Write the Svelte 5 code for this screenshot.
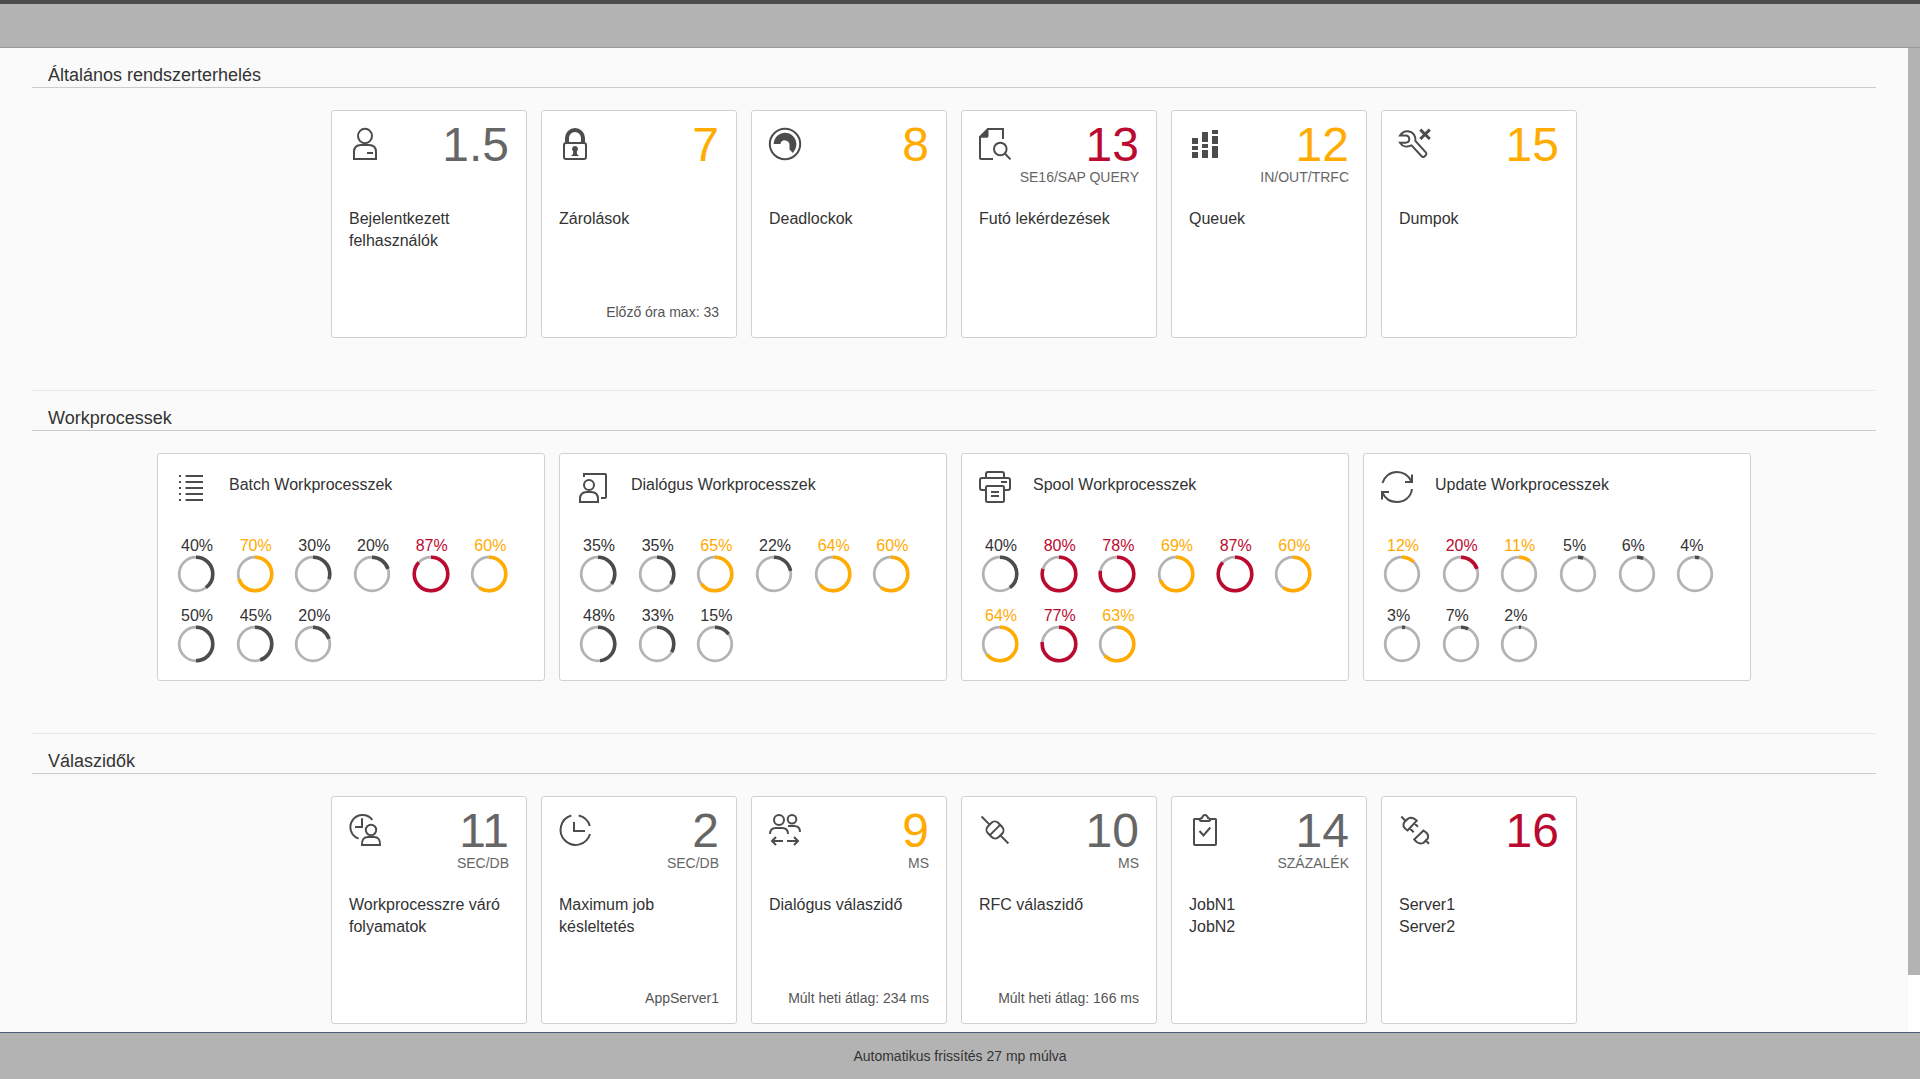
<script>
  import { onMount } from 'svelte';

  const loadTiles = [
    { icon: 'person', value: '1.5', tone: 'neutral', title: 'Bejelentkezett felhasználók' },
    { icon: 'lock', value: '7', tone: 'warn', title: 'Zárolások', note: 'Előző óra max: 33' },
    { icon: 'gauge', value: '8', tone: 'warn', title: 'Deadlockok' },
    { icon: 'docSearch', value: '13', tone: 'bad', unit: 'SE16/SAP QUERY', title: 'Futó lekérdezések' },
    { icon: 'queue', value: '12', tone: 'warn', unit: 'IN/OUT/TRFC', title: 'Queuek' },
    { icon: 'wrench', value: '15', tone: 'warn', title: 'Dumpok' }
  ];

  const responseTiles = [
    { icon: 'pending', value: '11', tone: 'neutral', unit: 'SEC/DB', title: 'Workprocesszre váró folyamatok' },
    { icon: 'clock', value: '2', tone: 'neutral', unit: 'SEC/DB', title: 'Maximum job késleltetés', note: 'AppServer1' },
    { icon: 'people', value: '9', tone: 'warn', unit: 'MS', title: 'Dialógus válaszidő', note: 'Múlt heti átlag: 234 ms' },
    { icon: 'connected', value: '10', tone: 'neutral', unit: 'MS', title: 'RFC válaszidő', note: 'Múlt heti átlag: 166 ms' },
    { icon: 'task', value: '14', tone: 'neutral', unit: 'SZÁZALÉK', title: 'JobN1\nJobN2' },
    { icon: 'disconnected', value: '16', tone: 'bad', title: 'Server1\nServer2' }
  ];

  const processTiles = [
    { icon: 'list', title: 'Batch Workprocesszek', warn: 60, bad: 75, values: [40, 70, 30, 20, 87, 60, 50, 45, 20] },
    { icon: 'dialog', title: 'Dialógus Workprocesszek', warn: 60, bad: 75, values: [35, 35, 65, 22, 64, 60, 48, 33, 15] },
    { icon: 'printer', title: 'Spool Workprocesszek', warn: 60, bad: 75, values: [40, 80, 78, 69, 87, 60, 64, 77, 63] },
    { icon: 'refresh', title: 'Update Workprocesszek', warn: 10, bad: 20, values: [12, 20, 11, 5, 6, 4, 3, 7, 2] }
  ];

  const toneOf = (value, tile) => (value >= tile.bad ? 'bad' : value >= tile.warn ? 'warn' : 'normal');

  let pane;
  let thumbSize = $state(100);
  let thumbStart = $state(0);

  // Keeps the thumb in step with the visible share of the pane.
  function measure() {
    thumbSize = (pane.clientHeight / pane.scrollHeight) * 100;
    thumbStart = (pane.scrollTop / pane.scrollHeight) * 100;
  }

  onMount(measure);
</script>

<svelte:window onresize={measure} />

{#snippet icon(name)}
  <svg class="icon" viewBox="0 0 32 32" aria-hidden="true">
    {#if name === 'person'}
      <ellipse cx="16" cy="8" rx="7" ry="7.2" />
      <path d="M5 31V24Q5 17 12 17H20Q27 17 27 24V31ZM18 25H24" />
    {:else if name === 'lock'}
      <path class="heavy" d="M8 14V10A8 8 0 0 1 24 10V14" />
      <rect x="5" y="15" width="22" height="16" rx="2" />
      <path class="solid" d="M16 18A3 3 0 0 1 17.8 23.4L18 26L20 28H12L14 26L14.2 23.4A3 3 0 0 1 16 18Z" />
    {:else if name === 'gauge'}
      <circle cx="16" cy="16" r="15.2" />
      <path class="solid" d="M4.6 16A11.4 11.4 0 1 1 25.5 22.5L24 25L20.5 21.5V17A4.6 4.6 0 0 0 11.4 16Z" />
    {:else if name === 'docSearch'}
      <path d="M24 11V1H9L1 9V30Q1 31 2 31H14" />
      <path class="solid" d="M0 9.7L9.5 0V8Q9.5 9.7 8 9.7Z" />
      <circle cx="21.3" cy="21" r="6.3" />
      <path d="M26 25.8L31.5 31.4" />
    {:else if name === 'queue'}
      <path class="solid" d="M3 10H9V16H3ZM3 18H9V22H3ZM3 24H9V30H3ZM13 4H19V14H13ZM13 16H19V20H13ZM13 22H19V30H13ZM23 2H29V6H23ZM23 8H29V16H23ZM23 18H29V30H23Z" />
    {:else if name === 'wrench'}
      <path d="M1 7.5C3 4.2 6 3 9 3.2C14 3.7 17 8 16.4 13L27 24.5Q28 26 26.7 27.3L25.2 28.6Q23.8 29.6 22.6 28.3L12.6 17.4C8 19.4 3.2 18.5 1 14.8H6.5C11.5 14.6 11.5 7.6 6.5 7.5Z" />
      <path class="bold" d="M21.3 1.6L30.8 11M30.8 1.6L21.3 11" />
    {:else if name === 'list'}
      <path d="M4 5H6M4 11H6M4 17H6M4 23H6M4 29H6M10.5 5H28M10.5 11H28M10.5 17H28M10.5 23H28M10.5 29H28" />
    {:else if name === 'dialog'}
      <path d="M7 6V3H28Q29 3 29 4V26Q29 27 28 27H24" />
      <circle cx="12" cy="14" r="5" />
      <path d="M3 31V28Q3 21 10 21H14Q21 21 21 28V31Z" />
    {:else if name === 'printer'}
      <path d="M7 19H3Q1 19 1 17V9Q1 7 3 7H29Q31 7 31 9V17Q31 19 29 19H25M7 7V3Q7 1 9 1H23Q25 1 25 3V7M12 21H20M12 25H20M22 11H28" />
      <rect x="7" y="15" width="18" height="16" rx="1.5" />
    {:else if name === 'refresh'}
      <path d="M1.5 12C3.5 5.5 9 1 16 1C22 1 27.5 4.5 30.5 10.5M31 3.5V11H24M31 18C30 26 23.5 31 16 31C9.5 31 4 27.5 1.3 21.5M1 28.5V21H8" />
    {:else if name === 'pending'}
      <path d="M23.4 5.8A12.2 12.2 0 1 0 9.6 24.6M13 4.3V13H6M13 31Q12.6 23 19 23H25Q31.4 23 31 31Z" />
      <circle cx="22" cy="16" r="5.2" />
    {:else if name === 'clock'}
      <path d="M12.3 1.5A15 15 0 1 0 31 20M19.7 1.5A15 15 0 0 1 30.8 12M15 8V17H26" />
    {:else if name === 'people'}
      <circle cx="10" cy="6" r="5" />
      <circle cx="23" cy="5.3" r="4.3" />
      <path d="M1 20Q1 14 7 14H13Q19 14 19 20M19 12H25Q31 12 31 18M3 27H14M7 23L3 27L7 31M18 27H29M25 23L29 27L25 31" />
    {:else if name === 'connected'}
      <g transform="rotate(45 16 16)">
        <path d="M-3 16H8M24 16H35M16 8.4V23.6" />
        <rect x="8.4" y="8.7" width="15.2" height="14.6" rx="5" />
      </g>
    {:else if name === 'task'}
      <path d="M11 5H5.5Q5 5 5 5.5V30Q5 31 6 31H26Q27 31 27 30V5.5Q27 5 26.5 5H21M10.5 17L14.5 21.5L21.3 13.5" />
      <path d="M10.7 6Q10.7 4.4 13 4Q14 1 16 1Q18 1 19 4Q21.3 4.4 21.3 6Q21 7 20 7H12Q11 7 10.7 6Z" />
    {:else}
      <path d="M2.3 2.5L6.5 6.7M8.5 16.5L17.8 6.6Q13 2 8.8 4.8L5.2 8.4Q2.5 12.5 8.5 16.5ZM15.5 9.5L19 12.7M11 14.5L14.7 18.3" />
      <path d="M15.2 25.5L24.5 16.6Q30.5 20 28.8 24.5L24.5 28.8Q19.5 31 15.2 25.5ZM26.7 26.5L30 29.8" />
    {/if}
  </svg>
{/snippet}

{#snippet valueTiles(tiles)}
  <div class="tiles">
    {#each tiles as tile}
      <article class="tile">
        <div class="top">
          {@render icon(tile.icon)}
          <div class="figure">
            <span class="value {tile.tone}">{tile.value}</span>
            {#if tile.unit}<span class="unit">{tile.unit}</span>{/if}
          </div>
        </div>
        <h3>{tile.title}</h3>
        {#if tile.note}<p class="note">{tile.note}</p>{/if}
      </article>
    {/each}
  </div>
{/snippet}

<div class="shell">
  <header></header>
  <div class="body">
    <main bind:this={pane} onscroll={measure}>
      <section>
        <h2>Általános rendszerterhelés</h2>
        {@render valueTiles(loadTiles)}
      </section>
      <section>
        <h2>Workprocessek</h2>
        <div class="tiles">
          {#each processTiles as tile}
            <article class="tile wide">
              <div class="wide-top">
                {@render icon(tile.icon)}
                <h3>{tile.title}</h3>
              </div>
              <div class="rings">
                {#each tile.values as value}
                  <div class="ring {toneOf(value, tile)}">
                    <span>{value}%</span>
                    <svg viewBox="0 0 38 38" aria-hidden="true">
                      <circle class="track" cx="19" cy="19" r="16.8" />
                      <circle class="arc" cx="19" cy="19" r="16.8" pathLength="100" stroke-dasharray="{value} 100" transform="rotate(-90 19 19)" />
                    </svg>
                  </div>
                {/each}
              </div>
            </article>
          {/each}
        </div>
      </section>
      <section>
        <h2>Válaszidők</h2>
        {@render valueTiles(responseTiles)}
      </section>
    </main>
    <div class="rail" aria-hidden="true">
      <div class="thumb" style="height: {thumbSize}%; margin-top: calc((100vh - 95px) * {thumbStart / 100})"></div>
    </div>
  </div>
  <footer>Automatikus frissítés 27 mp múlva</footer>
</div>

<style>
  :global(body) {
    margin: 0;
  }

  .shell {
    display: flex;
    flex-direction: column;
    height: 100vh;
    background: #fafafa;
    color: #333;
    font-family: "Liberation Sans", Arial, sans-serif;
    font-size: 16px;
  }

  header {
    flex: none;
    box-sizing: border-box;
    height: 48px;
    border-top: 4px solid #4c4c4c;
    border-bottom: 1px solid #999;
    background: #b3b3b3;
  }

  .body {
    display: flex;
    flex: 1;
    min-height: 0;
  }

  main {
    flex: 1;
    min-width: 0;
    overflow-y: scroll;
    scrollbar-width: none;
  }

  .rail {
    flex: none;
    width: 12px;
    background: #fff;
  }

  .thumb {
    background: #b3b3b3;
  }

  section {
    margin: 0 32px;
    padding-bottom: 52px;
  }

  section + section {
    border-top: 1px solid #e8e8e8;
  }

  section:last-child {
    padding-bottom: 69px;
  }

  h2 {
    margin: 0 0 22px;
    padding: 16px 16px 1px;
    border-bottom: 1px solid #ccc;
    font-size: 18px;
    font-weight: 400;
    line-height: 22px;
  }

  h3 {
    margin: 0;
    font-size: 16px;
    font-weight: 400;
    line-height: 22px;
    white-space: pre-line;
  }

  .tiles {
    display: flex;
    flex-wrap: wrap;
    justify-content: center;
    gap: 14px;
  }

  .tile {
    display: flex;
    flex-direction: column;
    box-sizing: border-box;
    width: 196px;
    min-height: 228px;
    padding: 17px;
    border: 1px solid #d1d1d1;
    border-radius: 3px;
    background: #fff;
  }

  .tile.wide {
    width: 388px;
  }

  .top {
    display: flex;
    justify-content: space-between;
    height: 80px;
  }

  .icon {
    flex: none;
    width: 32px;
    height: 32px;
    overflow: visible;
    fill: none;
    stroke: #4c4c4c;
    stroke-width: 2;
  }

  .icon .solid {
    fill: #4c4c4c;
    stroke: none;
  }

  .icon .heavy {
    stroke-width: 4;
  }

  .icon .bold {
    stroke-width: 3;
  }

  .figure {
    display: flex;
    flex-direction: column;
    align-items: flex-end;
    gap: 7px;
  }

  .value {
    font-size: 48px;
    line-height: 34px;
  }

  .neutral {
    color: #666;
  }

  .warn {
    color: #ffab00;
  }

  .bad {
    color: #bb0a30;
  }

  .unit {
    color: #666;
    font-size: 14px;
    line-height: 16px;
  }

  .note {
    margin: auto 0 0;
    color: #555;
    font-size: 14px;
    line-height: 16px;
    text-align: right;
  }

  .wide-top {
    display: flex;
    gap: 22px;
    height: 66px;
  }

  .wide-top h3 {
    line-height: 28px;
  }

  .rings {
    display: grid;
    grid-template-columns: repeat(6, 1fr);
    row-gap: 14px;
  }

  .ring span {
    display: block;
    padding-left: 6px;
    line-height: 18px;
  }

  .ring svg {
    display: block;
    width: 38px;
    height: 38px;
    margin-left: 2px;
    fill: none;
  }

  .track {
    stroke: #b3b3b3;
    stroke-width: 2.8;
  }

  .arc {
    stroke: currentColor;
    stroke-width: 3.6;
  }

  .normal .arc {
    stroke: #4c4c4c;
  }

  footer {
    display: flex;
    flex: none;
    align-items: center;
    justify-content: center;
    box-sizing: border-box;
    height: 47px;
    border-top: 1px solid #475e75;
    background: #b3b3b3;
    font-size: 14px;
  }
</style>
